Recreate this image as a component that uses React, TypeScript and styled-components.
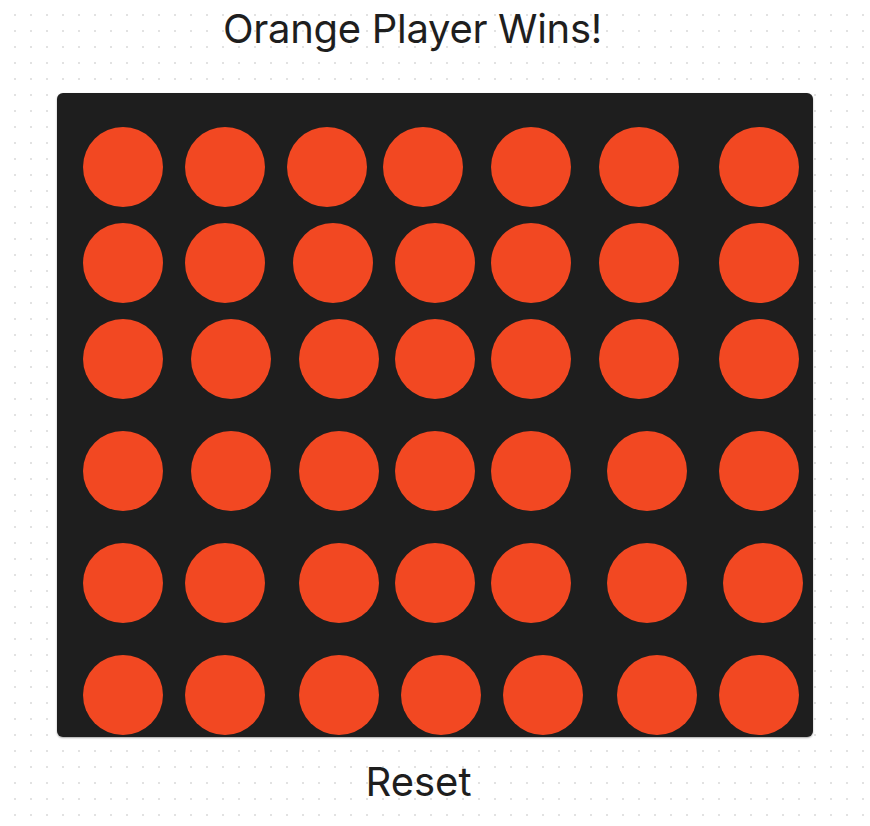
import React from "react";
import styled, { createGlobalStyle } from "styled-components";

const GlobalStyle = createGlobalStyle`
  html, body {
    margin: 0;
    padding: 0;
    background-color: #ffffff;
    background-image: radial-gradient(circle, #e2e2e2 1px, transparent 1.2px);
    background-size: 16px 16px;
    background-position: 7px 7px;
    font-family: Inter, "Liberation Sans", sans-serif;
    color: #1e1e1e;
  }
  #root {
    min-height: 826px;
  }
`;

const Page = styled.div`
  width: 870px;
  display: flex;
  flex-direction: column;
  align-items: flex-start;
`;

const Title = styled.h1`
  align-self: stretch;
  margin: 5px 45px 0 0;
  font-size: 40px;
  font-weight: 400;
  line-height: 48px;
  letter-spacing: -0.3px;
  text-align: center;
`;

const Board = styled.div`
  margin: 40px 0 0 57px;
  width: 756px;
  height: 644px;
  box-sizing: border-box;
  padding: 34px 0 0 0;
  background: #1e1e1e;
  border-radius: 6px;
  box-shadow: 0 1px 2px rgba(0, 0, 0, 0.35);
  display: flex;
  flex-direction: column;
`;

const Row = styled.div<{ $gap: number }>`
  display: flex;
  height: 80px;
  margin-top: ${(p) => p.$gap}px;
`;

const Disc = styled.div<{ $offset: number }>`
  flex: none;
  width: 80px;
  height: 80px;
  border-radius: 50%;
  background: #f24822;
  margin-left: ${(p) => p.$offset}px;
`;

const ResetButton = styled.button`
  align-self: stretch;
  margin: 21px 33px 0 0;
  padding: 0;
  border: none;
  background: transparent;
  font-family: Inter, "Liberation Sans", sans-serif;
  font-size: 40px;
  font-weight: 400;
  line-height: 48px;
  color: #1e1e1e;
  text-align: center;
  cursor: pointer;
`;

const rowGaps = [0, 16, 16, 32, 32, 32];
const lefts = [
  [83, 185, 287, 383, 491, 599, 719],
  [83, 185, 293, 395, 491, 599, 719],
  [83, 191, 299, 395, 491, 599, 719],
  [83, 191, 299, 395, 491, 607, 719],
  [83, 185, 299, 395, 491, 607, 723],
  [83, 185, 299, 401, 503, 617, 719],
];

export default function App() {
  return (
    <>
      <GlobalStyle />
      <Page>
        <Title>Orange Player Wins!</Title>
        <Board>
          {lefts.map((row, r) => (
            <Row key={r} $gap={rowGaps[r]}>
              {row.map((x, c) => {
                const prevEnd = c === 0 ? 57 : row[c - 1] + 80;
                return <Disc key={c} $offset={x - prevEnd} />;
              })}
            </Row>
          ))}
        </Board>
        <ResetButton>Reset</ResetButton>
      </Page>
    </>
  );
}
